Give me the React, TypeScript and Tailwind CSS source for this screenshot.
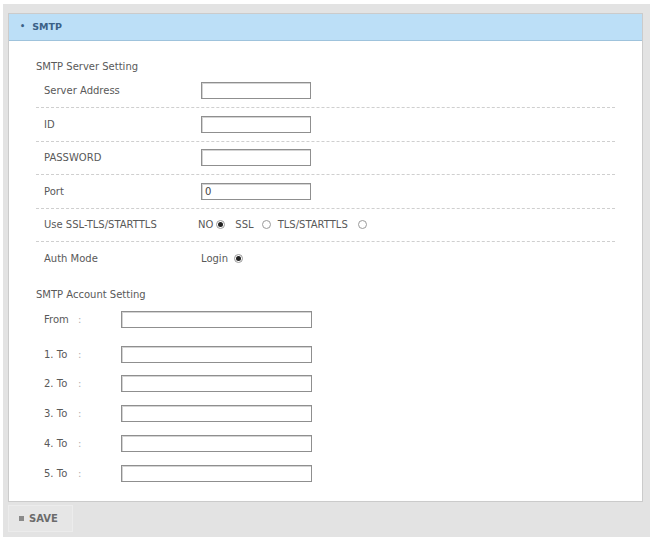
import React from "react";

const font = { fontFamily: '"DejaVu Sans", Verdana, sans-serif' };

function Radio({ checked, className = "" }: { checked?: boolean; className?: string }) {
  return (
    <span
      className={`inline-flex h-[9px] w-[9px] items-center justify-center rounded-full border border-[#9a9a9a] bg-white ${className}`}
    >
      {checked && <span className="h-[5px] w-[5px] rounded-full bg-[#222]" />}
    </span>
  );
}

function ServerRow({ label, last, children }: { label: string; last?: boolean; children: React.ReactNode }) {
  return (
    <div className={`flex h-[33.5px] items-center ${last ? "" : "border-b border-dashed border-[#cfcfcf]"}`}>
      <div className="w-[165px] pl-[8px]">{label}</div>
      <div className="flex items-center">{children}</div>
    </div>
  );
}

function TextBox({ value, wide }: { value?: string; wide?: boolean }) {
  return (
    <div
      className={`flex h-[17px] items-center border border-[#8f8f8f] bg-white pl-[3px] text-[#444] shadow-[inset_1px_1px_0_#d4d4d4] ${
        wide ? "w-[191px]" : "w-[110px]"
      }`}
    >
      {value}
    </div>
  );
}

function AccountRow({ label }: { label: string }) {
  return (
    <div className="flex h-[29.75px] items-center">
      <div className="flex w-[85px] pl-[8px]">
        <span className="w-[34px]">{label}</span>
        <span className="text-[#b0b0b0]">:</span>
      </div>
      <TextBox wide />
    </div>
  );
}

export default function App() {
  return (
    <div className="h-[539px] w-[653px] bg-white px-[3px] pt-[4px] text-[10px] text-[#595959]" style={font}>
      <div className="bg-[#e3e3e3] pl-[5px] pr-[7px] pt-[9px] pb-[5px]">
        {/* SMTP panel */}
        <div className="border border-[#cbcbcb] bg-white">
          <div className="flex h-[27px] items-center gap-[7px] border-b border-[#9fc3dc] bg-[#bcdff7] pl-[11px] text-[9.5px] font-bold text-[#3b6187]">
            <span className="text-[8px]">•</span>
            <span>SMTP</span>
          </div>

          <div className="pl-[27px] pr-[27px] pt-[19px] pb-[13px]">
            <div className="h-[13px] leading-[13px]">SMTP Server Setting</div>
            <div className="mt-[1.5px]">
              <ServerRow label="Server Address">
                <TextBox />
              </ServerRow>
              <ServerRow label="ID">
                <TextBox />
              </ServerRow>
              <ServerRow label="PASSWORD">
                <TextBox />
              </ServerRow>
              <ServerRow label="Port">
                <TextBox value="0" />
              </ServerRow>
              <ServerRow label="Use SSL-TLS/STARTTLS">
                <div className="-ml-[3px] flex items-center">
                  <span>NO</span>
                  <Radio checked className="ml-[3px]" />
                  <span className="ml-[10px]">SSL</span>
                  <Radio className="ml-[8px]" />
                  <span className="ml-[7px]">TLS/STARTTLS</span>
                  <Radio className="ml-[10px]" />
                </div>
              </ServerRow>
              <ServerRow label="Auth Mode" last>
                <div className="flex items-center">
                  <span>Login</span>
                  <Radio checked className="ml-[6px]" />
                </div>
              </ServerRow>
            </div>

            <div className="mt-[12px] h-[13px] leading-[13px]">SMTP Account Setting</div>
            <div className="mt-[4px]">
              <AccountRow label="From" />
            </div>
            <div className="mt-[5px]">
              {["1. To", "2. To", "3. To", "4. To", "5. To"].map((l) => (
                <AccountRow key={l} label={l} />
              ))}
            </div>
          </div>
        </div>

        {/* save bar */}
        <div className="pt-[3px]">
          <button className="flex h-[27px] w-[65px] items-center gap-[5px] border border-[#ececec] bg-[#e6e6e6] pl-[10px] font-bold text-[#6b6b6b]">
            <span className="h-[5px] w-[5px] bg-[#8a8a8a]" />
            <span>SAVE</span>
          </button>
        </div>
      </div>
    </div>
  );
}
